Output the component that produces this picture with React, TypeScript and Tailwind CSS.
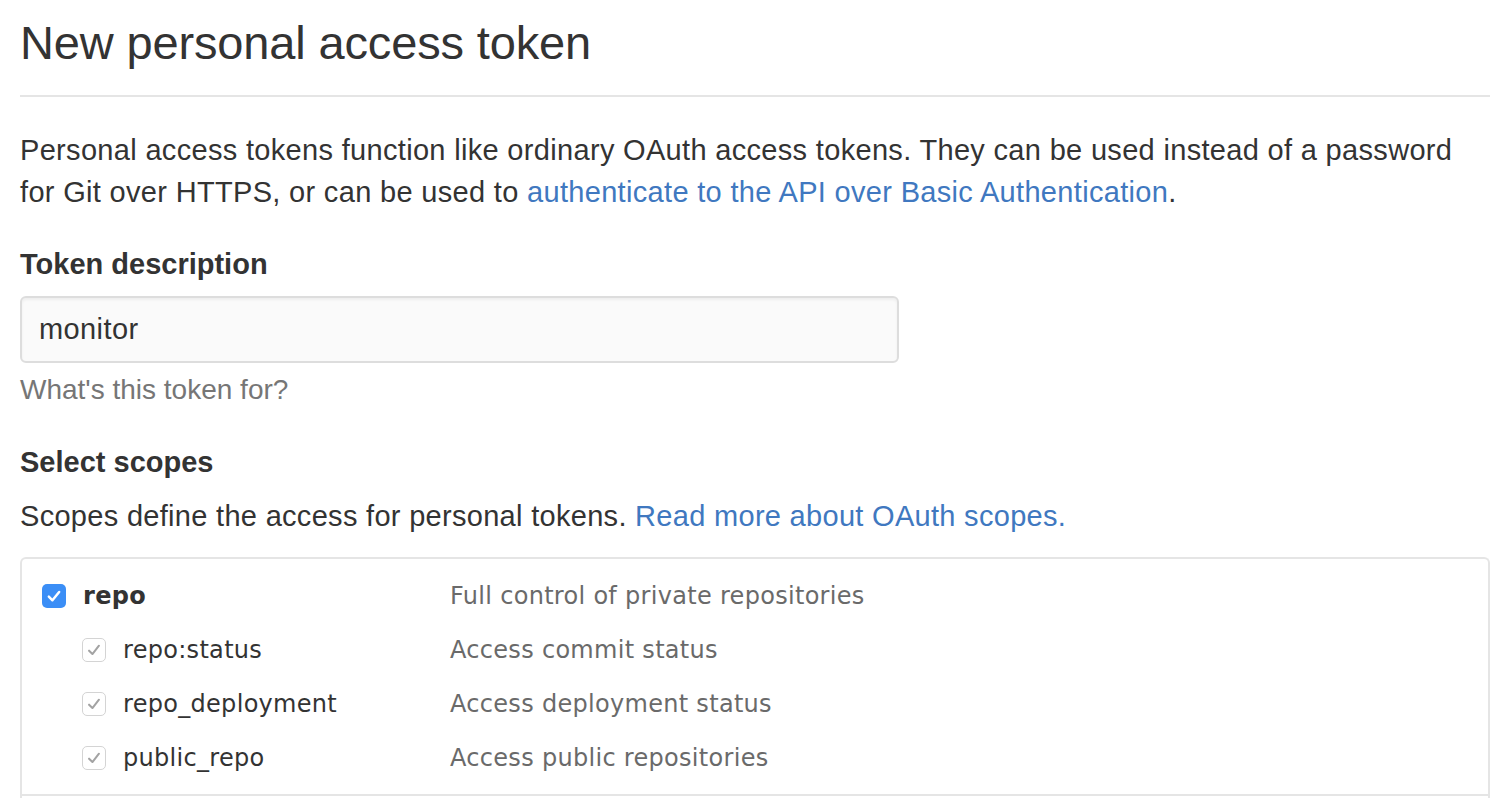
import React from "react";

const sans = { fontFamily: '"Liberation Sans", Arial, sans-serif' };
const table = { fontFamily: '"DejaVu Sans", Verdana, sans-serif' };

function BlueCheck() {
  return (
    <span className="flex h-[24px] w-[24px] items-center justify-center rounded-[5px] bg-[#3b8ef6]">
      <svg width="18" height="18" viewBox="0 0 16 16" fill="none">
        <path d="M3.4 8.6 L6.6 11.8 L12.6 4.4" stroke="white" strokeWidth="2.2" strokeLinecap="round" strokeLinejoin="round" />
      </svg>
    </span>
  );
}

function GrayCheck() {
  return (
    <span className="flex h-[24px] w-[24px] items-center justify-center rounded-[5px] border border-[#d4d4d4] bg-white">
      <svg width="18" height="18" viewBox="0 0 16 16" fill="none">
        <path d="M3.6 8.6 L6.6 11.6 L12.4 4.2" stroke="#a3a3a3" strokeWidth="1.8" strokeLinecap="round" strokeLinejoin="round" />
      </svg>
    </span>
  );
}

function Row({ name, desc, sub }: { name: string; desc: string; sub?: boolean }) {
  return (
    <div className="flex h-[54px] items-center tracking-[0.3px]">
      <div className={sub ? "flex w-[428px] items-center pl-[60px]" : "flex w-[428px] items-center pl-[20px]"}>
        {sub ? <GrayCheck /> : <BlueCheck />}
        <span className={sub ? "ml-[17px] text-[24px] text-[#333]" : "ml-[17px] text-[24px] font-bold text-[#333]"}>{name}</span>
      </div>
      <span className="text-[24px] text-[#6a6a6a]">{desc}</span>
    </div>
  );
}

export default function App() {
  return (
    <div className="h-[798px] overflow-hidden bg-white pl-[20px] pr-[14px] text-[#333]" style={sans}>
      <div className="border-b-2 border-[#e5e5e5] pt-[13px] pb-[22px]">
        <h1 className="text-[47px] leading-[60px] font-normal tracking-[-0.15px] text-[#333]">New personal access token</h1>
      </div>
      <p className="mt-[32px] text-[29px] leading-[42px] tracking-[0.32px]">
        Personal access tokens function like ordinary OAuth access tokens. They can be used instead of a password for Git over HTTPS, or can be used to{" "}
        <a className="text-[#4078c0]">authenticate to the API over Basic Authentication</a>.
      </p>
      <div className="mt-[30px] text-[29px] font-bold leading-[42px]">Token description</div>
      <div className="mt-[11px] flex h-[67px] w-[879px] items-center rounded-[6px] border-2 border-[#dddddd] bg-[#fafafa] pl-[17px] text-[29px] tracking-[0.4px] shadow-[inset_0_2px_3px_rgba(0,0,0,0.05)]">
        monitor
      </div>
      <div className="mt-[6px] text-[28px] leading-[42px] text-[#767676]">What's this token for?</div>
      <div className="mt-[30px] text-[29px] font-bold leading-[42px]">Select scopes</div>
      <p className="mt-[12px] text-[29px] leading-[42px] tracking-[0.3px]">
        Scopes define the access for personal tokens. <a className="text-[#4078c0]">Read more about OAuth scopes.</a>
      </p>
      <div className="mt-[20px] rounded-t-[6px] border-2 border-b-0 border-[#e5e5e5]" style={table}>
        <div className="pt-[10px] pb-[9px]">
          <Row name="repo" desc="Full control of private repositories" />
          <Row name="repo:status" desc="Access commit status" sub />
          <Row name="repo_deployment" desc="Access deployment status" sub />
          <Row name="public_repo" desc="Access public repositories" sub />
        </div>
        <div className="h-[20px] border-t-2 border-[#e5e5e5]" />
      </div>
    </div>
  );
}
